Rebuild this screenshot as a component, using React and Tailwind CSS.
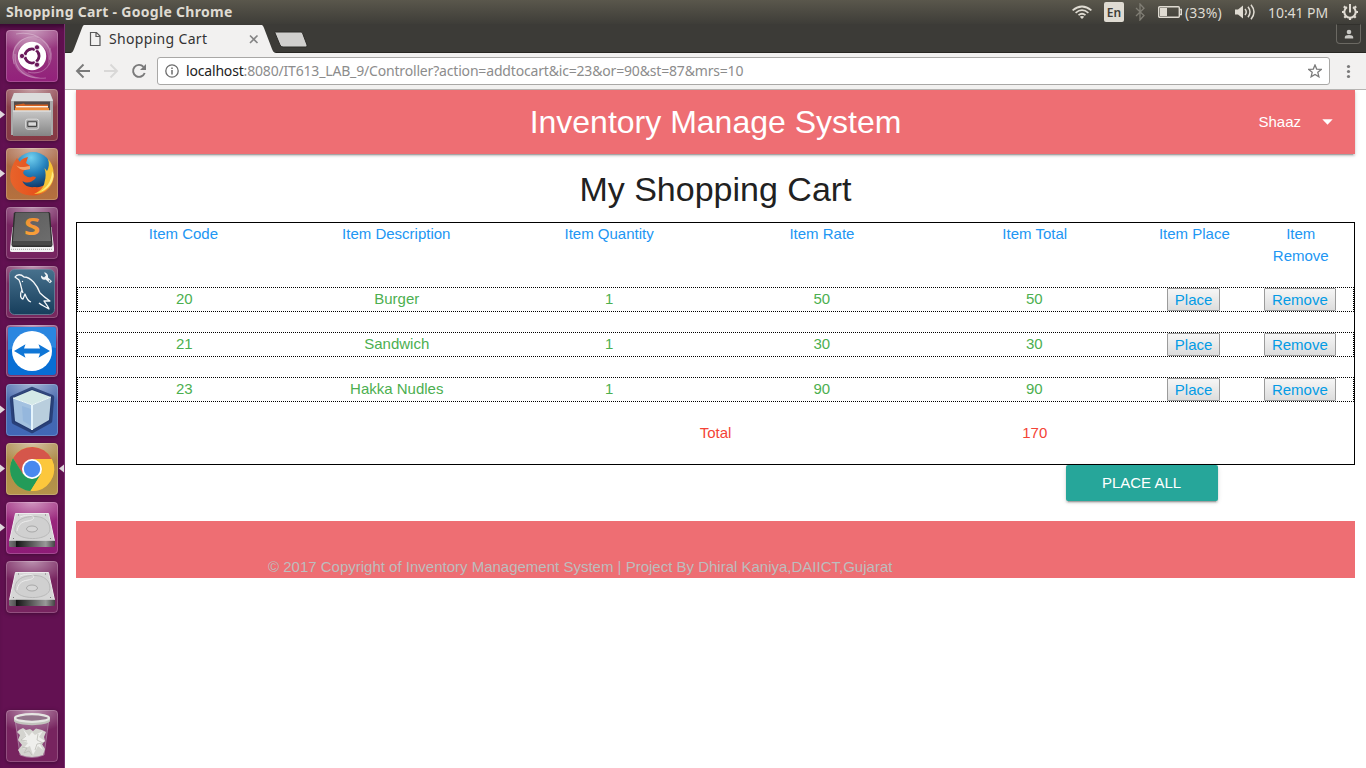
const Tile = ({ bg, children, arrow, active }) => (
  <div className="relative flex h-[52px] w-full shrink-0 justify-center">
    <div className={`h-[52px] w-[52px] overflow-hidden rounded-[4px] shadow-[0_1px_4px_rgba(0,0,0,0.35)] ${bg}`}>
      <svg width="52" height="52" viewBox="0 0 52 52">
        <defs>
          <linearGradient id="metal" x1="0" y1="0" x2="0" y2="1">
            <stop offset="0" stopColor="#c8c8c8" />
            <stop offset="1" stopColor="#858585" />
          </linearGradient>
          <radialGradient id="glow" cx=".5" cy="0" r=".75">
            <stop offset="0" stopColor="#fff" stopOpacity="0.5" />
            <stop offset="1" stopColor="#fff" stopOpacity="0" />
          </radialGradient>
        </defs>
        <rect width="52" height="30" fill="url(#glow)" />
        {children}
        <rect x="0.5" y="0.5" width="51" height="51" rx="3.5" fill="none" stroke="#fff" strokeOpacity="0.2" />
      </svg>
    </div>
    {arrow && (
      <svg className="absolute top-[21px] left-0" width="5" height="9" viewBox="0 0 5 9">
        <path d="M0 .5 5 4.5 0 8.5z" fill="#dfd8dc" />
      </svg>
    )}
    {active && (
      <svg className="absolute top-[21px] right-0" width="5" height="9" viewBox="0 0 5 9">
        <path d="M5 .5 0 4.5 5 8.5z" fill="#dfd8dc" />
      </svg>
    )}
  </div>
);

const Dash = () => (
  <>
    <path d="M7 30C4 12 20 2 36 10C44 14 47 25 42 35C44 22 38 13 26 12C14 13 10 20 12 30C15 40 22 45 34 48C20 49 9 42 7 30Z" fill="#fff" fillOpacity=".2" />
    <path d="M8 34C3 16 18 3 34 8M44 18C49 34 38 46 22 42M10 4C30 0 48 14 44 30M40 48C20 50 8 40 9 24" fill="none" stroke="#fff" strokeOpacity=".28" strokeWidth="1.1" />
    <circle cx="26" cy="26" r="14.200" fill="#fff" />
    <circle cx="26" cy="26" r="7" fill="none" stroke="#69185a" strokeWidth="3" />
    <path d="M26 26 14 26M26 26 32 15.6M26 26 32 36.4" stroke="#fff" strokeWidth="1.3" />
    <g fill="#69185a" stroke="#fff" strokeWidth=".8">
      <circle cx="16" cy="26" r="2.600" />
      <circle cx="31" cy="17.300" r="2.600" />
      <circle cx="31" cy="34.700" r="2.600" />
    </g>
    <circle cx="26" cy="26" r="5.400" fill="#fff" />
  </>
);

const Files = () => (
  <>
    <path d="M8 4H44L47 11V46H5V11Z" fill="#aaa" />
    <path d="M8 4H44L47 12H5Z" fill="#dcdcdc" />
    <path d="M8 12.500H44V25H8z" fill="#554b49" />
    <path d="M9 16l9-1.500 1 1h23v6H9z" fill="#d76120" />
    <path d="M10 17h32v1.500H10z" fill="#fff2df" />
    <path d="M9 19h34v3H9z" fill="#f08c38" />
    <path d="M7 21.500h38v25.500H7z" fill="url(#metal)" />
    <path d="M7 22h38" stroke="#e8e8e8" />
    <rect x="19.700" y="30.200" width="13" height="10" rx="2" fill="#a5a5a5" stroke="#dedede" />
    <rect x="21.800" y="32.800" width="8.800" height="4.600" rx=".5" fill="#d9d9d9" stroke="#444" strokeWidth="1.100" />
  </>
);

const Firefox = () => (
  <>
    <defs>
      <radialGradient id="globe" cx=".45" cy=".15" r=".8">
        <stop offset="0" stopColor="#72d0ef" />
        <stop offset=".5" stopColor="#2583be" />
        <stop offset="1" stopColor="#123968" />
      </radialGradient>
      <linearGradient id="fox" x1="0" y1="0" x2="1" y2="0">
        <stop offset="0" stopColor="#e8632b" />
        <stop offset=".6" stopColor="#e5521c" />
        <stop offset="1" stopColor="#f9a338" />
      </linearGradient>
    </defs>
    <circle cx="27" cy="23" r="19" fill="url(#globe)" />
    <path d="M11 10C5 18 3 27 5 34C9 44 18 48 28 47.500C40 47 48 37 48 26C44 35 36 40 29 39C21 40 17 36 16.500 33C21 36 26 34 29 31L30 29C26 27 24 31 20 28C16 26 17 23 19 22L24 21V18L20 15 22 9C17 10 15 12 14 14Z" fill="url(#fox)" />
    <path d="M42 11C48 17 49 27 46 34C42 42 36 46 28 46C35 43 38 39 38.500 34C40 29 40 25 38.500 20L41 23C43 20 43.500 15 42 11Z" fill="#f7c437" />
    <path d="M46 23C46 33 40 41 33 44C43 42 48 33 47.500 26Z" fill="#ffec82" />
    <path d="M19 22C15 22 12 20 10 17C13 20 18 19 24 18L24 21Z" fill="#f3a36a" />
  </>
);

const Sublime = () => (
  <>
    <defs>
      <linearGradient id="key" x1="0" y1="0" x2="1" y2="1">
        <stop offset="0" stopColor="#5c5c5c" />
        <stop offset="1" stopColor="#6d6d6d" />
      </linearGradient>
      <linearGradient id="ember" x1="0" y1="0" x2="0" y2="1">
        <stop offset="0" stopColor="#e98a32" />
        <stop offset="1" stopColor="#ffa53a" />
      </linearGradient>
    </defs>
    <path d="M6.500 20H45.500L48 41V43.500Q48 45 46 45H6Q4 45 4 43.500V41Z" fill="#f3f3f3" />
    <path d="M5 42.300h42" stroke="#8d8d8d" strokeWidth=".8" strokeDasharray="1 1" />
    <path d="M9.500 5H42.500Q44 5 44.200 6.500L46.500 37.500Q46.500 40 44.500 40H7.500Q5.500 40 5.500 37.500L7.800 6.500Q8 5 9.500 5Z" fill="#2f2f2f" />
    <path d="M10.500 5.500H41.500Q42.500 5.500 42.700 6.500L45 34H7L9.300 6.500Q9.500 5.500 10.500 5.500Z" fill="url(#key)" />
    <path d="M7 34H45L46 38.500H6Z" fill="#484848" />
    <g transform="translate(26 28) scale(1.25 1)">
      <text x="0" y="0" textAnchor="middle" fontFamily="Open Sans, sans-serif" fontSize="23.500" fontWeight="700" fill="url(#ember)">S</text>
    </g>
  </>
);

const Workbench = () => (
  <>
    <defs>
      <linearGradient id="sea" x1="0" y1="0" x2="0" y2="1">
        <stop offset="0" stopColor="#47718d" />
        <stop offset="1" stopColor="#173e5c" />
      </linearGradient>
    </defs>
    <rect x="3.500" y="3.500" width="45" height="45" rx="5" fill="url(#sea)" stroke="#69869c" strokeOpacity=".8" />
    <path d="M17 27C15 22 15 18 13 14L9 11C11 8 15 8 18 11C25 11 31 19 34 27C37 30 41 33 44 35L38 35C39 37 42 40 43 43C38 40 35 39 33 37M16 24C13 29 15 33 17 33L19 28C20 31 22 35 25 36" fill="none" stroke="#f3f6f8" strokeWidth="1.300" strokeLinejoin="round" />
    <circle cx="16.500" cy="15.500" r=".7" fill="#fff" />
    <path d="M38 6.500 40 9.500 38 11.500 35 9.500C34.500 12.500 37 14.500 39.500 13.500L44 17.300 46 15.300 42 11.500C42.500 8.500 40.500 6.500 38 6.500Z" fill="#f1f5f7" />
    <circle cx="43.500" cy="15" r=".8" fill="#315b79" />
  </>
);

const TeamViewer = () => (
  <>
    <rect x="2" y="2" width="48" height="48" rx="3" fill="#086ed4" />
    <path d="M2 5Q2 2 5 2H47Q50 2 50 5V23Q27 17 2 25Z" fill="#2a86e0" />
    <circle cx="26" cy="26" r="20" fill="#fff" />
    <path d="M8 26 19.500 19.300 18 23.500H34L32.500 19.300 44 26 32.500 32.700 34 28.500H18L19.500 32.700Z" fill="#0f76d6" />
  </>
);

const Netbeans = () => (
  <>
    <path d="M26 5 46 13 44 37 26 47 8 38 6 14Z" fill="#253968" stroke="#243a70" strokeWidth="4.500" strokeOpacity=".85" strokeLinejoin="round" />
    <path d="M26 6 45 13 26 21 7 14Z" fill="#d4e9e7" />
    <path d="M7 14 26 21V46L9 37Z" fill="#a3c1e0" />
    <path d="M26 21 45 13 43 36 26 46Z" fill="#b9cedd" />
    <path d="M26 21V46" stroke="#e4f4fc" strokeWidth="2" />
    <path d="M7 14 26 21 45 13" fill="none" stroke="#eefafa" />
    <path d="M16 22 25 25V42L17 37Z" fill="#7ba6d8" fillOpacity=".35" />
  </>
);

const ChromeIcon = () => (
  <>
    <circle cx="26" cy="26" r="22" fill="#efbc34" />
    <path d="M7 15A22 22 0 0 1 45.700 16H26L16.500 31Z" fill="#d5564b" />
    <path d="M7 15A22 22 0 0 0 24.500 48L35 31 26 36 17 31Z" fill="#239b59" />
    <path d="M26 16H45.700A22 22 0 0 1 24.500 48L35 31A10 10 0 0 0 26 16Z" fill="#fcc73c" />
    <circle cx="26" cy="26" r="10" fill="#fff" />
    <circle cx="26" cy="26" r="8.200" fill="#4989ef" />
  </>
);

const Drive = () => (
  <>
    <defs>
      <linearGradient id="diskside" x1="0" y1="0" x2="1" y2="0">
        <stop offset="0" stopColor="#777" />
        <stop offset=".14" stopColor="#555" />
        <stop offset=".16" stopColor="#151515" />
        <stop offset=".8" stopColor="#999" />
        <stop offset="1" stopColor="#444" />
      </linearGradient>
    </defs>
    <path d="M9.500 11.500H42.500L48.500 39H3.500Z" fill="#d6d6d6" stroke="#ededed" />
    <path d="M3 38.700h46V43.500Q49 45 47.500 45H4.500Q3 45 3 43.500z" fill="url(#diskside)" />
    <path d="M9 29C8 18 18 14 30 14.500C42 15 45 24 43.500 29.500C40 39 13 39 9 29" fill="#d0d0d0" stroke="#b3b3b3" strokeWidth=".8" />
    <path d="M14 15C27 10 33 17 22 19C14 20 12 24 11 29" fill="none" stroke="#ececec" />
    <ellipse cx="26" cy="27" rx="5.500" ry="3" fill="#d6d6d6" stroke="#a8a8a8" />
    <path d="M7 36.500h1M44 36.500h1M12 13h1M39 13h1" stroke="#777" />
  </>
);

const Trash = () => (
  <>
    <path d="M9 9 14 45Q26 50 38 45L43 9Z" fill="#d6c6d4" fillOpacity=".22" stroke="#c8b2c4" strokeOpacity=".5" />
    <path d="M13 20 17 18 20 20 24 19 27 21 30 18.500 36 20 40 22 38 27 39 31 36 34 39 39 37 45Q26 49 15 45L12 40 16 35 12 30 14 25 11 22Z" fill="#d4d4cf" />
    <path d="M17 19l3 6-5 5 7 3-5 6 7-3 3 9 5-9 5 4-3-6 5-3-6-4 4-6-8 4-3-3-3 4Z" fill="#efefec" />
    <path d="M16 37l5 1-3 5 5-2 3 4M20 26l-5 4 6 1M32 24l-1 6 6 3-6 1-2 6" fill="none" stroke="#bcbdb6" strokeWidth=".8" />
    <path d="M8 8V11C10 16.500 42 16.500 44 11V8Z" fill="#c2c3bd" />
    <ellipse cx="26" cy="8" rx="17" ry="3.800" fill="#93758b" stroke="#e6e6e3" strokeWidth="2.200" />
  </>
);

const Launcher = () => (
  <aside className="flex w-[65px] shrink-0 flex-col gap-[7px] border-r border-[#7b3070] bg-[#631152] pt-[6px] pb-[6px] shadow-[inset_0_6px_5px_-3px_rgba(25,0,25,0.6)]">
    <Tile bg="bg-gradient-to-b from-[#963c7e] to-[#93207b]"><Dash /></Tile>
    <Tile bg="bg-gradient-to-b from-[#8d434d] to-[#853944]" arrow><Files /></Tile>
    <Tile bg="bg-gradient-to-b from-[#a66342] to-[#b5713e]" arrow><Firefox /></Tile>
    <Tile bg="bg-[#762560]"><Sublime /></Tile>
    <Tile bg="bg-[#78285f]"><Workbench /></Tile>
    <Tile bg="bg-[#7d3770]"><TeamViewer /></Tile>
    <Tile bg="bg-gradient-to-b from-[#4869ab] to-[#4168b7]" arrow><Netbeans /></Tile>
    <Tile bg="bg-gradient-to-b from-[#a98646] to-[#b5944a]" arrow active><ChromeIcon /></Tile>
    <Tile bg="bg-gradient-to-b from-[#a02c80] to-[#8d1b76]" arrow><Drive /></Tile>
    <Tile bg="bg-[#77245f]"><Drive /></Tile>
    <div className="grow" />
    <Tile bg="bg-[#77245f]"><Trash /></Tile>
  </aside>
);

const TopBar = () => (
  <header className="flex h-6 shrink-0 items-center bg-gradient-to-b from-[#5a574c] to-[#3e3d38] pl-[6px] font-['Noto_Sans',sans-serif] text-[#dfdbd2]">
    <span className="text-[14px] leading-6 font-bold whitespace-nowrap tracking-[0.3px]">Shopping Cart - Google Chrome</span>
    <div className="ml-auto flex h-6 w-[294px] items-center">
      <svg className="shrink-0" width="20" height="24" viewBox="0 0 20 24" fill="none" stroke="#dfdbd2" strokeWidth="1.700">
        <path d="M.6 10.3Q10 2.7 19.4 10.3M3.6 12.8Q10 7.6 16.4 12.8M6.5 15.2Q10 12.3 13.5 15.2" />
        <path d="M10 19 7.8 16.8Q10 15.2 12.2 16.8Z" fill="#dfdbd2" stroke="none" />
      </svg>
      <span className="ml-3 flex h-5 w-5 shrink-0 items-center justify-center rounded-[2px] bg-[#dfdbd2] pt-px text-[12px] font-semibold text-[#3f3e38]">En</span>
      <svg className="ml-[11px] shrink-0" width="10" height="18" viewBox="0 0 10 18" fill="none" stroke="#807e75" strokeWidth="1.300">
        <path d="M1 5 9 12.5 5 17V1L9 5.3 1 13" />
      </svg>
      <svg className="ml-[13px] shrink-0" width="24" height="14" viewBox="0 0 24 14" fill="none" stroke="#dfdbd2" strokeWidth="1.400">
        <rect x=".7" y="1.700" width="20.600" height="10.600" rx="1" />
        <path d="M22 4.5H23.3V9.5H22" />
        <path d="M2 3h7v8H2z" fill="#dfdbd2" stroke="none" />
      </svg>
      <span className="ml-[3px] w-[39px] shrink-0 text-[14px] whitespace-nowrap tracking-[0.15px]">(33%)</span>
      <svg className="ml-[11px] shrink-0" width="21" height="18" viewBox="0 0 21 18" fill="none" stroke="#dfdbd2" strokeWidth="1.500">
        <path d="M0 6.5H3L8 2.5V15.5L3 11.5H0Z" fill="#dfdbd2" stroke="none" />
        <path d="M10 6Q12.5 9 10 12M13 3.7Q17 9 13 14.3M16 1.7Q22 9 16 16.3" />
      </svg>
      <span className="ml-[12px] w-[62px] shrink-0 text-[14px] whitespace-nowrap tracking-[-0.05px]">10:41 PM</span>
      <svg className="ml-[11px] shrink-0" width="18" height="18" viewBox="0 0 18 18" fill="none" stroke="#dfdbd2">
        <path d="M6 4.200A5.700 5.700 0 1 0 12 4.200" strokeWidth="2" />
        <path d="M9 1V9.500" strokeWidth="2" />
        <path d="M1 9H3.500M14.500 9H17M2.800 3.300 4.800 5M13.200 5 15.200 3.300M3.300 14.700 5 13M13 13 14.700 14.700M9 15V17" strokeWidth="2.200" />
      </svg>
    </div>
  </header>
);

const TabStrip = () => (
  <div className="relative flex h-[29px] shrink-0 border-b border-[#282723] bg-[#3c3b37]">
    <svg className="absolute top-0 left-0" width="260" height="29" viewBox="0 0 260 29">
      <path d="M5.500 29C7.500 28.500 8 27.500 9 25L17 4C18 1.500 18.500 1 20 1H195.500C197.500 1 198 1.500 199 4L207 25C208 27.500 208.500 28.500 211 29Z" fill="#f2f1f0" />
      <path d="M210.500 8H236Q237 8 237.500 9L242 21Q242.500 23 241 23H218Q216 23 215 21L210 9Q209.500 8 210.500 8Z" fill="#d0cfcd" stroke="#2d2c29" />
      <path d="M25.500 8.500H31.500L35 12V21.500H25.500ZM31 8.500V12.500H35" fill="none" stroke="#5a5a5a" strokeWidth="1.200" />
      <path d="M185 11.500 192.500 19M192.500 11.500 185 19" stroke="#858585" strokeWidth="1.600" />
    </svg>
    <span className="relative ml-[44px] font-['Noto_Sans',sans-serif] text-[14px] leading-[29px] whitespace-nowrap tracking-[0.33px] text-[#333]">Shopping Cart</span>
    <div className="relative mr-[5px] ml-auto flex h-[20px] w-[25px] items-center justify-center rounded-b-[4px] border border-[#6b6963] border-t-[#32312d]">
      <svg width="10" height="10" viewBox="0 0 10 10" fill="#c9c8c4">
        <circle cx="5" cy="3" r="2.300" />
        <path d="M.8 9.500V8Q1 6 5 6T9.200 8V9.500Z" />
      </svg>
    </div>
  </div>
);

const Toolbar = () => (
  <div className="flex h-[37px] shrink-0 items-center border-b border-[#b6b4b2] bg-[#f2f1f0]">
    <svg className="shrink-0" width="92" height="36" viewBox="0 0 92 36" fill="none" strokeWidth="1.900">
      <path d="M25 18H12.500M18.500 11.500 12 18 18.500 24.500" stroke="#7a7a7a" />
      <path d="M39 18H51.500M45.500 11.500 52 18 45.500 24.500" stroke="#d9d8d7" />
      <path d="M78.500 13.800A6 6 0 1 0 79.700 20" stroke="#7a7a7a" />
      <path d="M81 11V17H75Z" fill="#7a7a7a" />
    </svg>
    <div className="flex h-7 w-[1173px] shrink-0 items-center rounded-[3px] border border-[#a9a8a6] bg-white pl-[7px]">
      <svg className="shrink-0" width="14" height="14" viewBox="0 0 14 14" fill="none" stroke="#6c6c6c" strokeWidth="1.300">
        <circle cx="7" cy="7" r="6.200" />
        <path d="M7 6V10.500M7 3.500V5" strokeWidth="1.500" />
      </svg>
      <span className="ml-[7px] pb-[2px] font-['Noto_Sans',sans-serif] text-[14px] whitespace-nowrap tracking-[-0.175px] text-[#8c8c8c]"><span className="text-[#222]">localhost</span>:8080/IT613_LAB_9/Controller?action=addtocart&amp;ic=23&amp;or=90&amp;st=87&amp;mrs=10</span>
      <svg className="mr-[7px] ml-auto" width="14" height="14" viewBox="0 0 14 14" fill="none" stroke="#7a7a7a" strokeWidth="1.300">
        <path d="M7 1 8.700 5.100 13.300 5.400 9.800 8.300 10.900 12.800 7 10.400 3.100 12.800 4.200 8.300 .7 5.400 5.300 5.100Z" />
      </svg>
    </div>
    <svg className="ml-[16px]" width="5" height="15" viewBox="0 0 5 15" fill="#7a7a7a">
      <circle cx="2.500" cy="2.500" r="1.600" />
      <circle cx="2.500" cy="7.500" r="1.600" />
      <circle cx="2.500" cy="12.500" r="1.600" />
    </svg>
  </div>
);

const ITEMS = [
  [20, "Burger", 1, 50, 50],
  [21, "Sandwich", 1, 30, 30],
  [23, "Hakka Nudles", 1, 90, 90],
];

const HEADINGS = ["Item Code", "Item Description", "Item Quantity", "Item Rate", "Item Total"];

const CartButton = ({ children }) => (
  <button className="h-[23px] rounded-[1px] border border-[#9b9b9b] bg-gradient-to-b from-[#f6f6f6] to-[#dddddd] px-[7px] leading-[21px] text-[#039be5]">
    {children}
  </button>
);

const Page = () => (
  <main className="grow overflow-hidden bg-white px-[11px] font-['Liberation_Sans',Arial,sans-serif] text-[15px] leading-[22.5px] text-[#212121]">
    <nav className="grid h-16 grid-cols-[1fr_auto_1fr] items-center bg-[#ee6e73] text-white shadow-[0_2px_2px_0_rgba(0,0,0,0.14),0_1px_5px_0_rgba(0,0,0,0.12),0_3px_1px_-2px_rgba(0,0,0,0.2)]">
      <span />
      <span className="text-[32px] leading-[64px]">Inventory Manage System</span>
      <div className="flex items-center justify-end pr-[22px]">
        Shaaz
        <svg className="ml-[21px]" width="11" height="6" viewBox="0 0 11 6"><path d="M.3.300H10.700L5.500 5.700Z" fill="#fff" /></svg>
      </div>
    </nav>
    <h1 className="flex h-[68px] items-center justify-center pt-px text-[34px] leading-[40px]">My Shopping Cart</h1>
    <section className="h-[243px] border border-black text-center">
      <div className="mb-[19px] grid h-[45px] grid-cols-12 leading-[22px] text-[#2196f3]">
        {HEADINGS.map((h) => <div key={h} className="col-span-2">{h}</div>)}
        <div>Item Place</div>
        <div className="px-3">Item Remove</div>
      </div>
      {ITEMS.map((row) => (
        <div key={row[0]} className="mb-5 grid h-[25px] grid-cols-12 border border-dotted border-black text-[#4caf50]">
          {row.map((v, i) => <div key={i} className="col-span-2">{v}</div>)}
          <div className="flex justify-center"><CartButton>Place</CartButton></div>
          <div className="flex justify-center"><CartButton>Remove</CartButton></div>
        </div>
      ))}
      <div className="grid grid-cols-12 text-[#f44336]">
        <div className="col-span-4 col-start-5">Total</div>
        <div className="col-span-2">170</div>
      </div>
    </section>
    <div className="flex justify-end pr-[137px]">
      <button className="h-9 w-[152px] rounded-[2px] bg-[#26a69a] pr-px leading-9 text-white shadow-[0_2px_2px_0_rgba(0,0,0,0.14),0_1px_5px_0_rgba(0,0,0,0.12),0_3px_1px_-2px_rgba(0,0,0,0.2)]">PLACE ALL</button>
    </div>
    <footer className="mt-5 h-[57px] bg-[#ee6e73] pt-[35px] pl-[192px] text-[#bdbdbd]">
      © 2017 Copyright of Inventory Management System | Project By Dhiral Kaniya,DAIICT,Gujarat
    </footer>
  </main>
);

export default function App() {
  return (
    <div className="flex h-[768px] w-[1366px] flex-col overflow-hidden">
      <TopBar />
      <div className="flex min-h-0 grow">
        <Launcher />
        <div className="flex min-w-0 grow flex-col">
          <TabStrip />
          <Toolbar />
          <Page />
        </div>
      </div>
    </div>
  );
}
